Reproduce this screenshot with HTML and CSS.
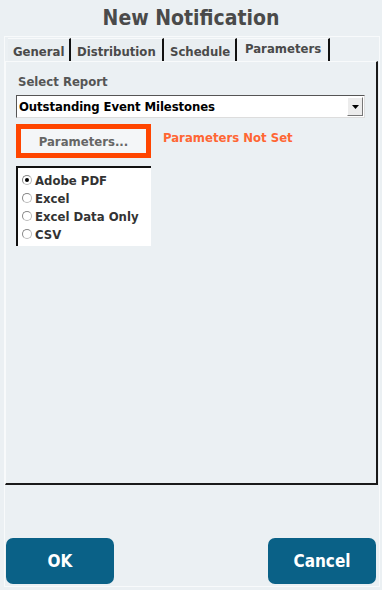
FILE: index.html
```html
<!DOCTYPE html>
<html>
<head>
<meta charset="utf-8">
<link rel="stylesheet" href="styles.css">
</head>
<body>
<div class="screen">
  <h1 class="title">New Notification</h1>
  <div class="frame">
    <div class="tabs">
      <div class="tab tab-general">General</div>
      <div class="tab tab-distribution">Distribution</div>
      <div class="tab tab-schedule">Schedule</div>
      <div class="tab tab-parameters active">Parameters</div>
    </div>
    <div class="panel">
      <div class="label">Select Report</div>
      <div class="select">
        <span class="select-text">Outstanding Event Milestones</span>
        <span class="select-btn"><svg width="7" height="4" viewBox="0 0 7 4"><path d="M0 0H7L3.5 4Z" fill="#000"/></svg></span>
      </div>
      <div class="param-row">
        <div class="param-outline"><div class="param-btn">Parameters...</div></div>
        <div class="param-status">Parameters Not Set</div>
      </div>
      <div class="radios">
        <div class="radio-item"><span class="radio checked"></span>Adobe PDF</div>
        <div class="radio-item"><span class="radio"></span>Excel</div>
        <div class="radio-item"><span class="radio"></span>Excel Data Only</div>
        <div class="radio-item"><span class="radio"></span>CSV</div>
      </div>
    </div>
    <div class="actions">
      <button class="btn">OK</button>
      <button class="btn">Cancel</button>
    </div>
  </div>
</div>
</body>
</html>
```

FILE: styles.css
```css
* { box-sizing: border-box; }
html, body { margin: 0; padding: 0; }
body {
  background: #ebf0f3;
  font-family: "DejaVu Sans Condensed", "DejaVu Sans", sans-serif;
  font-weight: bold;
  width: 382px;
  height: 590px;
  overflow: hidden;
}
.screen { display: flex; flex-direction: column; height: 590px; }
.title {
  margin: 0;
  height: 36px;
  line-height: 37px;
  text-align: center;
  font-size: 21px;
  color: #4a4a4a;
  font-weight: bold;
}
.frame {
  margin: 0 2px 3px 4px;
  flex: 1;
  border: 1px solid #f8fafb;
  display: flex;
  flex-direction: column;
}
.tabs {
  display: flex;
  height: 24px;
  padding: 1px 0 0 3px;
}
.tab {
  font-size: 13px;
  color: #4a4a4a;
  padding: 5px 0 0 5px;
  border-right: 2px solid #111;
  border-top: 1px solid #f8fafb;
  background: #e9eef1;
}
.tab-general { width: 63px; }
.tab-distribution { width: 93px; padding-left: 6px; }
.tab-schedule { width: 73px; padding-left: 6px; }
.tab-parameters { width: 93px; }
.tab.active {
  background: #edf1f4;
  padding-top: 2px;
  padding-left: 8px;
}
.panel {
  height: 424px;
  margin-right: 1px;
  border-left: 1px solid #f8fafb;
  border-top: 1px solid #f8fafb;
  border-right: 2px solid #1a1a1a;
  border-bottom: 2px solid #1a1a1a;
  padding: 12px 11px 0 10px;
}
.label {
  font-size: 13px;
  color: #555;
  padding-left: 2px;
  height: 21px;
}
.select {
  display: flex;
  align-items: center;
  justify-content: space-between;
  height: 23px;
  width: 349px;
  background: #fff;
  border-top: 1px solid #555;
  border-left: 1px solid #555;
  border-right: 1px solid #ddd;
  border-bottom: 1px solid #ddd;
  padding: 0 1px 0 2px;
}
.select-text { font-size: 13px; color: #000; letter-spacing: -0.1px; }
.select-btn {
  width: 16px;
  height: 19px;
  background: #ececec;
  border-top: 1px solid #fff;
  border-left: 1px solid #fff;
  border-right: 1px solid #777;
  border-bottom: 1px solid #777;
  display: flex;
  align-items: center;
  justify-content: center;
}
.param-row {
  display: flex;
  align-items: center;
  gap: 12px;
  margin-top: 6px;
}
.param-outline {
  width: 135px;
  height: 34px;
  border: 5px solid #ff4500;
  background: #f4f6f8;
  display: flex;
  align-items: center;
  justify-content: center;
}
.param-btn { font-size: 13px; color: #666; }
.param-status {
  font-size: 13px;
  color: #ff6633;
  margin-top: -8px;
}
.radios {
  margin-top: 8px;
  width: 135px;
  height: 80px;
  background: #fff;
  border-top: 2px solid #111;
  border-left: 2px solid #111;
  padding: 3px 0 0 4px;
}
.radio-item {
  display: flex;
  align-items: center;
  height: 18px;
  font-size: 13px;
  color: #333;
}
.radio {
  width: 10px;
  height: 10px;
  border-radius: 50%;
  border: 1px solid #bbb;
  border-top-color: #888;
  border-left-color: #888;
  background: #fff;
  margin-right: 3px;
  position: relative;
}
.radio.checked::after {
  content: "";
  position: absolute;
  left: 2px;
  top: 2px;
  width: 4px;
  height: 4px;
  border-radius: 50%;
  background: #000;
}
.actions {
  margin-top: auto;
  display: flex;
  justify-content: space-between;
  padding: 0 3px 2px 1px;
}
.btn {
  width: 108px;
  height: 46px;
  border: none;
  border-radius: 7px;
  background: #0a6187;
  color: #fff;
  font-family: "DejaVu Sans Condensed", "DejaVu Sans", sans-serif;
  font-weight: bold;
  font-size: 17px;
}
```
